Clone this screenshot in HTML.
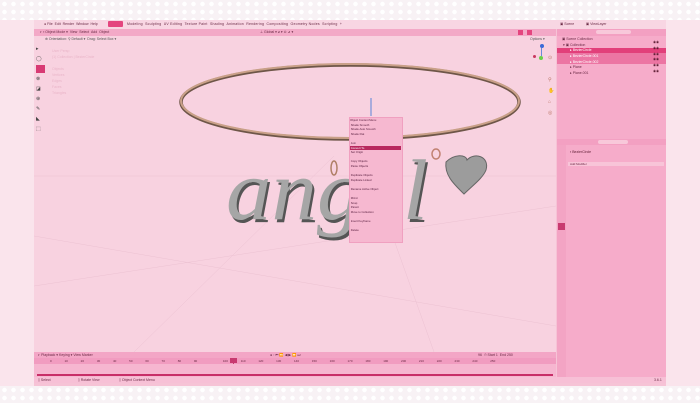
<!DOCTYPE html>
<html><head><meta charset="utf-8"><style>
*{margin:0;padding:0;box-sizing:border-box}
body{width:700px;height:403px;overflow:hidden;background:#fbe6ee;font-family:"Liberation Sans",sans-serif;position:relative}
.a{position:absolute}
.t{font-size:3.5px;color:#6a2a45;white-space:nowrap}
.lace{background-color:#f8f2f5;background-image:radial-gradient(circle,#ffffff 0 2px,transparent 2.5px);background-size:9px 8px;}
</style></head><body>
<div class="a lace" style="left:0;top:0;width:700px;height:20px"></div>
<div class="a lace" style="left:0;top:386px;width:700px;height:17px"></div>
<div class="a" style="left:0;top:20px;width:34px;height:366px;background:#fae4ec"></div>
<div class="a" style="left:666px;top:20px;width:34px;height:366px;background:#fae4ec"></div>
<div class="a" style="left:34px;top:20px;width:632px;height:366px;background:#f6c3d6"></div>
<div class="a" style="left:34px;top:20px;width:632px;height:9px;background:#f8d6e3"></div>
<div class="a t" style="left:44px;top:22px">● File &nbsp;Edit &nbsp;Render &nbsp;Window &nbsp;Help</div>
<div class="a" style="left:108px;top:21px;width:15px;height:6px;background:#e4457f;border-radius:1px"></div>
<div class="a t" style="left:127px;top:22px;letter-spacing:.2px">Modeling &nbsp;Sculpting &nbsp;UV Editing &nbsp;Texture Paint &nbsp;Shading &nbsp;Animation &nbsp;Rendering &nbsp;Compositing &nbsp;Geometry Nodes &nbsp;Scripting &nbsp;+</div>
<div class="a t" style="left:560px;top:22px">▣ Scene &nbsp;&nbsp;&nbsp;&nbsp;&nbsp;&nbsp;&nbsp;&nbsp;&nbsp;&nbsp;&nbsp;▣ ViewLayer</div>
<div class="a" style="left:34px;top:29px;width:522px;height:7px;background:#f3a9c7"></div>
<div class="a t" style="left:40px;top:30px">◐ ▪ Object Mode ▾ &nbsp;View &nbsp;Select &nbsp;Add &nbsp;Object</div>
<div class="a t" style="left:260px;top:30px">⊥ Global ▾ ⌀ ▾ ⊙ ⊿ ▾</div>
<div class="a" style="left:518px;top:30px;width:5px;height:5px;background:#e4457f"></div>
<div class="a" style="left:527px;top:30px;width:5px;height:5px;background:#e4457f"></div>
<div class="a" style="left:34px;top:36px;width:522px;height:316px;background:#f8d2e0"></div>
<div class="a t" style="left:45px;top:37px;color:#555">⊕ Orientation: ⚲ Default ▾ &nbsp;Drag: Select Box ▾</div>
<div class="a t" style="left:530px;top:37px;color:#555">Options ▾</div>
<div class="a" style="left:36px;top:44px;width:10px;height:78px">
<div class="t" style="font-size:5px;color:#444;line-height:10px">▸<br>◯</div>
<div style="width:9px;height:8px;background:#d83a74;margin:1px 0"></div>
<div class="t" style="font-size:5px;color:#444;line-height:10px">⊗<br>◪<br>⊕<br>✎<br>◣<br>⬚</div></div>
<div class="a t" style="left:52px;top:48px;color:#e9b5c8;line-height:6px">User Persp<br>(1) Collection | BezierCircle<br><br>Objects<br>Vertices<br>Edges<br>Faces<br>Triangles</div>
<div class="a" style="left:540px;top:44px;width:4px;height:4px;border-radius:50%;background:#3a6ad8"></div>
<div class="a" style="left:541px;top:48px;width:1px;height:8px;background:#6a8ad8"></div>
<div class="a" style="left:533px;top:55px;width:3px;height:3px;border-radius:50%;background:#c8385e"></div>
<div class="a" style="left:539px;top:56px;width:4px;height:4px;border-radius:50%;background:#6ad04a"></div>
<div class="a t" style="left:548px;top:53px;font-size:5px;color:#b76;line-height:11px">⊙<br><br>⚲<br>✋<br>⌂<br>◎</div>
<svg class="a" style="left:34px;top:36px" width="522" height="316">
<g stroke="#ecc2d2" stroke-width=".5" fill="none">
<path d="M0 250 L522 170 M0 200 L522 290 M100 316 L300 120 M400 316 L330 120 M0 140 L522 140"/>
</g>
<ellipse cx="316" cy="66" rx="169" ry="37" fill="none" stroke="#6e5648" stroke-width="3.5"/>
<ellipse cx="316" cy="65" rx="169" ry="37" fill="none" stroke="#c9a088" stroke-width="2"/>
<ellipse cx="300" cy="132" rx="3" ry="7" fill="none" stroke="#b08068" stroke-width="1.5"/>
<ellipse cx="402" cy="118" rx="4" ry="5" fill="none" stroke="#c08070" stroke-width="1.5"/>
<path d="M412 126 C420 118 432 118 433 124 C440 116 456 120 452 134 C449 142 438 150 430 158 C422 150 410 140 412 126Z" fill="#9c9c9c" stroke="#666" stroke-width="1"/>
<text x="194" y="186" font-family="Liberation Serif" font-style="italic" font-size="86" fill="#555" textLength="202" lengthAdjust="spacingAndGlyphs">angel</text>
<text x="192" y="183" font-family="Liberation Serif" font-style="italic" font-size="86" fill="#a6a6a6" textLength="202" lengthAdjust="spacingAndGlyphs">angel</text>
<line x1="337" y1="62" x2="337" y2="80" stroke="#5a84d8" stroke-width="1"/>
</svg>
<div class="a" style="left:349px;top:117px;width:54px;height:126px;background:#f6b8d0;border:1px solid #f0a0c0"></div>
<div class="a t" style="left:350px;top:118px;font-size:2.8px;line-height:4.6px;color:#5a2040">Object Context Menu<br>&nbsp;Shade Smooth<br>&nbsp;Shade Auto Smooth<br>&nbsp;Shade Flat<br><br>&nbsp;Join<br><span style="display:inline-block;width:51px;background:#b8285e;color:#fff">&nbsp;Convert To</span><br>&nbsp;Set Origin<br><br>&nbsp;Copy Objects<br>&nbsp;Paste Objects<br><br>&nbsp;Duplicate Objects<br>&nbsp;Duplicate Linked<br><br>&nbsp;Rename Active Object<br><br>&nbsp;Mirror<br>&nbsp;Snap<br>&nbsp;Parent<br>&nbsp;Move to Collection<br><br>&nbsp;Insert Keyframe<br><br>&nbsp;Delete</div>
<div class="a" style="left:557px;top:29px;width:109px;height:352px;background:#f6acca"></div>
<div class="a" style="left:557px;top:29px;width:109px;height:7px;background:#f3a0c2"></div>
<div class="a" style="left:596px;top:30px;width:35px;height:4px;background:#f8c8da;border-radius:2px"></div>
<div class="a t" style="left:562px;top:37px;line-height:5.8px">▣ Scene Collection<br>&nbsp;▾ ▣ Collection</div>
<div class="a" style="left:557px;top:48px;width:109px;height:5px;background:#e23f7a"></div>
<div class="a" style="left:557px;top:53px;width:109px;height:11px;background:#ec75a3"></div>
<div class="a t" style="left:570px;top:48px;line-height:5.8px;color:#fff">▸ BezierCircle<br>▸ BezierCircle.001<br>▸ BezierCircle.002</div>
<div class="a t" style="left:570px;top:65px;line-height:5.8px">▸ Plane<br>▸ Plane.001</div>
<div class="a t" style="left:653px;top:40px;line-height:5.8px;color:#5a1a30">◉◉<br>◉◉<br>◉◉<br>◉◉<br>◉◉<br>◉◉</div>
<div class="a" style="left:557px;top:139px;width:109px;height:6px;background:#f3a0c2"></div>
<div class="a" style="left:598px;top:140px;width:30px;height:4px;background:#f8c8da;border-radius:2px"></div>
<div class="a" style="left:557px;top:145px;width:9px;height:236px;background:#f3a4c4"></div>
<div class="a t" style="left:570px;top:150px;color:#5a1a30">▪ BezierCircle</div>
<div class="a" style="left:568px;top:162px;width:96px;height:4px;background:#f8c4d8"></div>
<div class="a t" style="left:570px;top:162px;font-size:3px">Add Modifier</div>
<div class="a" style="left:558px;top:223px;width:7px;height:7px;background:#c83a70"></div>
<div class="a" style="left:34px;top:352px;width:522px;height:6px;background:#f3a6c6"></div>
<div class="a t" style="left:38px;top:353px">◐ Playback ▾ Keying ▾ View Marker</div>
<div class="a t" style="left:270px;top:353px">● ◦ ⏮ ⏪ ◀ ▶ ⏩ ⏭</div>
<div class="a t" style="left:478px;top:353px">96 &nbsp;⏱ Start 1 &nbsp;End 250</div>
<div class="a" style="left:34px;top:358px;width:522px;height:6px;background:#f19cc0"></div>
<div class="a t" style="left:50px;top:359px;font-size:3px;word-spacing:12px">0 10 20 30 40 50 60 70 80 90 &nbsp;100 110 120 130 140 150 160 170 180 190 200 210 220 230 240 250</div>
<div class="a" style="left:230px;top:358px;width:7px;height:5px;background:#c83a70"></div>
<div class="a" style="left:233px;top:363px;width:1px;height:13px;background:#c83a70"></div>
<div class="a" style="left:34px;top:364px;width:522px;height:13px;background:#f6b6d0"></div>
<div class="a" style="left:37px;top:374px;width:516px;height:1.5px;background:#c82e68"></div>
<div class="a" style="left:34px;top:377px;width:632px;height:6px;background:#f7c0d6"></div>
<div class="a t" style="left:38px;top:378px">▯ Select &nbsp;&nbsp;&nbsp;&nbsp;&nbsp;&nbsp;&nbsp;&nbsp;&nbsp;&nbsp;&nbsp;&nbsp;&nbsp;&nbsp;&nbsp;&nbsp;&nbsp;&nbsp;&nbsp;&nbsp;&nbsp;&nbsp;&nbsp;&nbsp;&nbsp;&nbsp;&nbsp;▯ Rotate View &nbsp;&nbsp;&nbsp;&nbsp;&nbsp;&nbsp;&nbsp;&nbsp;&nbsp;&nbsp;&nbsp;&nbsp;&nbsp;&nbsp;&nbsp;&nbsp;&nbsp;&nbsp;&nbsp;▯ Object Context Menu</div>
<div class="a t" style="left:654px;top:378px">3.6.1</div>
</body></html>
